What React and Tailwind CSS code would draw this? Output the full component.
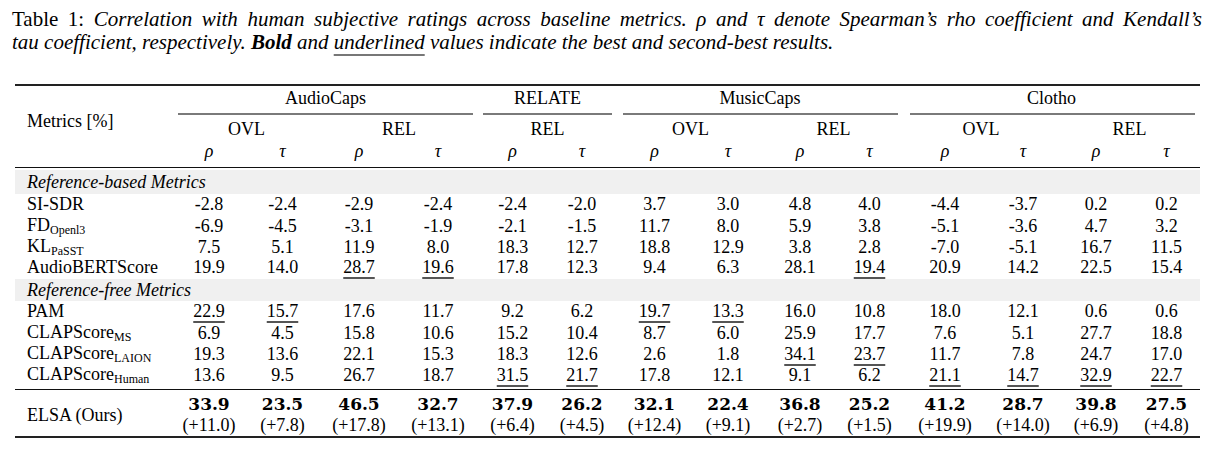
import React from "react";

const COLS =
  "grid grid-cols-[158px_72px_75px_78px_80px_69px_70px_75px_72px_72px_67px_84px_72px_74px_67px]";

const U = "u";

const rowsA = [
  { name: "SI-SDR", v: ["-2.8", "-2.4", "-2.9", "-2.4", "-2.4", "-2.0", "3.7", "3.0", "4.8", "4.0", "-4.4", "-3.7", "0.2", "0.2"] },
  { name: ["FD", "Openl3"], v: ["-6.9", "-4.5", "-3.1", "-1.9", "-2.1", "-1.5", "11.7", "8.0", "5.9", "3.8", "-5.1", "-3.6", "4.7", "3.2"] },
  { name: ["KL", "PaSST"], v: ["7.5", "5.1", "11.9", "8.0", "18.3", "12.7", "18.8", "12.9", "3.8", "2.8", "-7.0", "-5.1", "16.7", "11.5"] },
  { name: "AudioBERTScore", v: ["19.9", "14.0", "28.7u", "19.6u", "17.8", "12.3", "9.4", "6.3", "28.1", "19.4u", "20.9", "14.2", "22.5", "15.4"] },
];

const rowsB = [
  { name: "PAM", v: ["22.9u", "15.7u", "17.6", "11.7", "9.2", "6.2", "19.7u", "13.3u", "16.0", "10.8", "18.0", "12.1", "0.6", "0.6"] },
  { name: ["CLAPScore", "MS"], v: ["6.9", "4.5", "15.8", "10.6", "15.2", "10.4", "8.7", "6.0", "25.9", "17.7", "7.6", "5.1", "27.7", "18.8"] },
  { name: ["CLAPScore", "LAION"], v: ["19.3", "13.6", "22.1", "15.3", "18.3", "12.6", "2.6", "1.8", "34.1u", "23.7u", "11.7", "7.8", "24.7", "17.0"] },
  { name: ["CLAPScore", "Human"], v: ["13.6", "9.5", "26.7", "18.7", "31.5u", "21.7u", "17.8", "12.1", "9.1", "6.2", "21.1u", "14.7u", "32.9u", "22.7u"] },
];

const elsa = ["33.9", "23.5", "46.5", "32.7", "37.9", "26.2", "32.1", "22.4", "36.8", "25.2", "41.2", "28.7", "39.8", "27.5"];
const deltas = ["+11.0", "+7.8", "+17.8", "+13.1", "+6.4", "+4.5", "+12.4", "+9.1", "+2.7", "+1.5", "+19.9", "+14.0", "+6.9", "+4.8"];

function Name({ name }) {
  if (typeof name === "string") return <span>{name}</span>;
  return (
    <span>
      {name[0]}
      <span className="text-[12px] relative top-[3px]">{name[1]}</span>
    </span>
  );
}

function Cell({ v }) {
  const under = v.endsWith(U);
  const t = under ? v.slice(0, -1) : v;
  return (
    <div className="text-center">
      {under ? (
        <span className="underline decoration-[#555] decoration-[length:1.5px] underline-offset-[4px]">{t}</span>
      ) : (
        t
      )}
    </div>
  );
}

function DataRow({ row }) {
  return (
    <div className={`${COLS} h-[21px] leading-[21px] items-center`}>
      <div className="pl-[12px] whitespace-nowrap">
        <Name name={row.name} />
      </div>
      {row.v.map((v, i) => (
        <Cell key={i} v={v} />
      ))}
    </div>
  );
}

function GroupHead({ label, span, trimL = 5 }) {
  const spanCls = span === 4 ? "col-span-4" : "col-span-2";
  const ml = trimL === 7 ? "ml-[7px]" : trimL === 6 ? "ml-[6px]" : "ml-[5px]";
  return (
    <div className={`${spanCls} flex flex-col justify-end`}>
      <div className="text-center leading-[22px] pb-[4px]">{label}</div>
      <div className={`h-[2px] bg-[#7a7a7a] ${ml} mr-[5px]`} />
    </div>
  );
}

export default function App() {
  return (
    <div className="w-[1214px] h-[454px] overflow-hidden bg-white text-black font-['Liberation_Serif','Times_New_Roman',serif]">
      {/* Caption */}
      <div className="pl-[12px] pr-[12px] pt-[8px] text-[21px] leading-[23px]">
        <div className="text-justify [text-align-last:justify] whitespace-nowrap">
          Table 1: <i>Correlation with human subjective ratings across baseline metrics. ρ and τ denote Spearman’s rho coefficient and Kendall’s</i>
        </div>
        <div className="italic whitespace-nowrap">
          tau coefficient, respectively. <b>Bold</b> and{" "}
          <span className="underline decoration-[#777] decoration-[length:2px] underline-offset-[5px]">underlined</span> values
          indicate the best and second-best results.
        </div>
      </div>

      {/* Table */}
      <div className="ml-[15px] w-[1185px] mt-[30px] text-[18px]">
        <div className="h-[2px] bg-[#222]" />

        {/* Header */}
        <div className={`${COLS} grid-rows-[29px_26px_20px]`}>
          <div className="row-span-3 flex items-center pl-[12px] pb-[4px] whitespace-nowrap">Metrics [%]</div>
          <GroupHead label="AudioCaps" span={4} />
          <GroupHead label="RELATE" span={2} />
          <GroupHead label="MusicCaps" span={4} trimL={6} />
          <GroupHead label="Clotho" span={4} trimL={7} />

          <div className="col-span-2 text-center leading-[26px] pt-[1px]">OVL</div>
          <div className="col-span-2 text-center leading-[26px] pt-[1px]">REL</div>
          <div className="col-span-2 text-center leading-[26px] pt-[1px]">REL</div>
          <div className="col-span-2 text-center leading-[26px] pt-[1px]">OVL</div>
          <div className="col-span-2 text-center leading-[26px] pt-[1px]">REL</div>
          <div className="col-span-2 text-center leading-[26px] pt-[1px]">OVL</div>
          <div className="col-span-2 text-center leading-[26px] pt-[1px]">REL</div>

          {["ρ", "τ", "ρ", "τ", "ρ", "τ", "ρ", "τ", "ρ", "τ", "ρ", "τ", "ρ", "τ"].map((g, i) => (
            <div key={i} className="text-center italic leading-[20px]">
              {g}
            </div>
          ))}
        </div>

        <div className="h-[6px]" />
        <div className="h-[1px] bg-[#111]" />

        {/* Reference-based */}
        <div className="mt-[2px] h-[24px] leading-[24px] bg-[#f0f0f0] pl-[12px] italic">Reference-based Metrics</div>
        {rowsA.map((r, i) => (
          <DataRow key={i} row={r} />
        ))}

        {/* Reference-free */}
        <div className="mt-[1px] h-[22px] leading-[22px] bg-[#f0f0f0] pl-[12px] italic">Reference-free Metrics</div>
        {rowsB.map((r, i) => (
          <DataRow key={i} row={r} />
        ))}

        <div className="h-[4px]" />
        <div className="h-[1px] bg-[#111]" />

        {/* ELSA row */}
        <div className={`${COLS} pt-[4px]`}>
          <div className="pl-[12px] flex items-center whitespace-nowrap">ELSA (Ours)</div>
          {elsa.map((v, i) => (
            <div key={i} className="flex flex-col items-center">
              <div className="h-[21px] leading-[21px] font-['DejaVu_Serif',serif] font-bold text-[17px]">{v}</div>
              <div className="h-[21px] leading-[21px]">({deltas[i]})</div>
            </div>
          ))}
        </div>

        <div className="h-[2px] bg-[#222]" />
      </div>
    </div>
  );
}
